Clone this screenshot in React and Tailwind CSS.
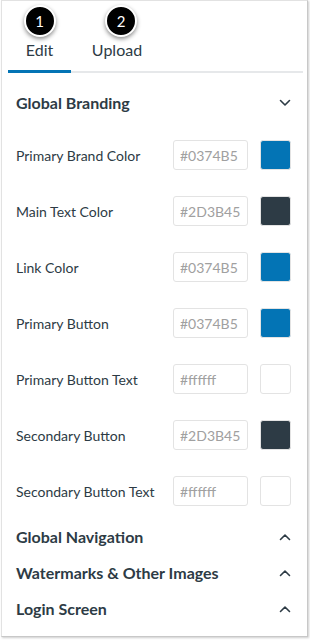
import React from "react";

const rows = [
  { label: "Primary Brand Color", value: "#0374B5", color: "bg-[#0374B5]" },
  { label: "Main Text Color", value: "#2D3B45", color: "bg-[#2D3B45]" },
  { label: "Link Color", value: "#0374B5", color: "bg-[#0374B5]" },
  { label: "Primary Button", value: "#0374B5", color: "bg-[#0374B5]" },
  { label: "Primary Button Text", value: "#ffffff", color: "bg-white" },
  { label: "Secondary Button", value: "#2D3B45", color: "bg-[#2D3B45]" },
  { label: "Secondary Button Text", value: "#ffffff", color: "bg-white" },
];

const Chevron = ({ up }) => (
  <svg width="12" height="8" viewBox="0 0 12 8" className="text-[#2D3B45]">
    <path
      d={up ? "M1.5 6.5 L6 2 L10.5 6.5" : "M1.5 1.5 L6 6 L10.5 1.5"}
      fill="none"
      stroke="currentColor"
      strokeWidth="1.6"
      strokeLinecap="round"
      strokeLinejoin="round"
    />
  </svg>
);

const Badge = ({ n, shift = "" }) => (
  <div className={`absolute -top-[33px] left-1/2 -translate-x-1/2 w-[32px] h-[32px] rounded-full bg-black border-2 border-white shadow-[0_2px_4px_rgba(0,0,0,0.45)] flex items-center justify-center text-white text-[15px] leading-none ${shift}`}>
    {n}
  </div>
);

const App = () => {
  return (
    <div className="w-[310px] h-[642px] bg-white font-['Lato',sans-serif] text-[#2D3B45]">
      <div className="ml-[1px] w-[307px] h-[637px] border border-[#e2e2e2] border-r-[#c8c8c8] border-b-[#c8c8c8] shadow-[1px_1px_2px_rgba(0,0,0,0.2)]">
        <div className="pt-[37px] px-[6px]">
          <div className="flex border-b-2 border-[#e6e8ea] mr-[-2px]">
            <div className="relative w-[63px] text-center text-[16px] pb-[8px] border-b-[3px] border-[#0374B5] -mb-[2px]">
              <Badge n="1" />
              Edit
            </div>
            <div className="relative ml-[17px] w-[58px] text-center text-[16px] pb-[8px]">
              <Badge n="2" shift="ml-[4px]" />
              Upload
            </div>
          </div>
        </div>

        <div className="flex items-center justify-between h-[48px] mt-[6px] pl-[14px] pr-[16px]">
          <span className="font-bold text-[16px]">Global Branding</span>
          <Chevron />
        </div>

        {rows.map((r) => (
          <div key={r.label} className="flex items-center h-[56px] pl-[14px] pr-[16px]">
            <span className="flex-1 text-[14px]">{r.label}</span>
            <div className="w-[75px] h-[30px] border border-[#e3e3e3] rounded-[3px] flex items-center pl-[6px] text-[14px] text-[#a0a0a0]">
              {r.value}
            </div>
            <div className={`ml-[12px] w-[31px] h-[30px] rounded-[3px] border border-[#e3e3e3] ${r.color}`} />
          </div>
        ))}

        {["Global Navigation", "Watermarks & Other Images", "Login Screen"].map((t) => (
          <div key={t} className="flex items-center justify-between h-[36px] pl-[14px] pr-[16px]">
            <span className="font-bold text-[16px]">{t}</span>
            <Chevron up />
          </div>
        ))}
      </div>
    </div>
  );
};

export default App;
